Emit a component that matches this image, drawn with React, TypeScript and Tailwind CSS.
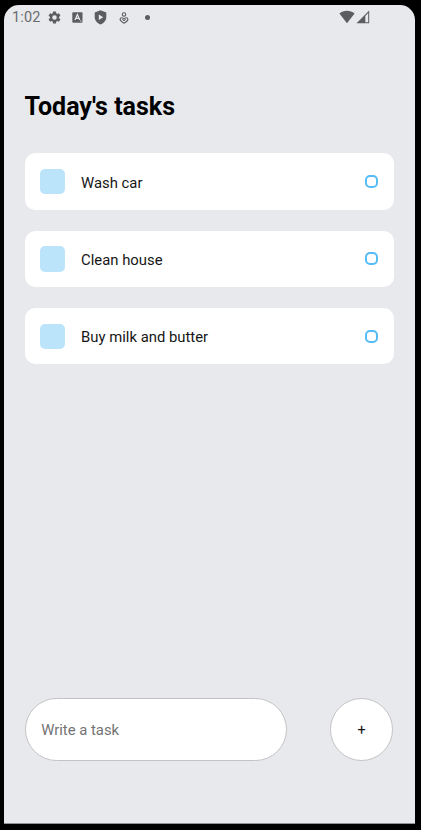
const tasks = ['Wash car', 'Clean house', 'Buy milk and butter'];

function StatusBar() {
  return (
    <div className="flex h-[25px] items-center text-[#5c5d60]">
      <span className="ml-[8px] w-[30px] pt-[1px] text-[14.5px] leading-[24px] tracking-[0.15px] whitespace-nowrap text-[#6b6c6f]">1:02</span>
      <svg className="ml-[5px] h-[15px] w-[15px]" viewBox="0 0 24 24" fill="currentColor">
        <path d="M19.14 12.94c.04-.3.06-.61.06-.94s-.02-.64-.07-.94l2.03-1.58a.49.49 0 0 0 .12-.61l-1.92-3.32a.49.49 0 0 0-.59-.22l-2.39.96a7 7 0 0 0-1.62-.94l-.36-2.54a.48.48 0 0 0-.48-.41h-3.84a.47.47 0 0 0-.47.41l-.36 2.54c-.59.24-1.13.57-1.62.94l-2.39-.96a.48.48 0 0 0-.59.22L2.74 8.87a.47.47 0 0 0 .12.61l2.03 1.58a7 7 0 0 0 0 1.88l-2.03 1.58a.49.49 0 0 0-.12.61l1.92 3.32c.12.22.37.29.59.22l2.39-.96c.5.38 1.03.7 1.62.94l.36 2.54c.05.24.24.41.48.41h3.84c.24 0 .44-.17.47-.41l.36-2.54a7 7 0 0 0 1.62-.94l2.39.96c.22.08.47 0 .59-.22l1.92-3.32a.47.47 0 0 0-.12-.61zM12 15.6A3.6 3.6 0 1 1 12 8.4a3.6 3.6 0 0 1 0 7.2z" />
      </svg>
      <svg className="ml-[10px] h-[11px] w-[11px]" viewBox="0 0 11 11">
        <rect x="0.3" y="0.3" width="10.2" height="10.4" rx="1" fill="currentColor" />
        <path d="M3 8 5.4 2.5 7.8 8M3.9 6.3h3" fill="none" stroke="#e8e9ed" strokeWidth="1.2" />
        <path d="M8 9h1.5" stroke="#e8e9ed" strokeWidth="0.8" />
      </svg>
      <svg className="ml-[11px] h-[15px] w-[13px]" viewBox="0 0 13 15">
        <path d="M6.5 0.2 12.3 2.4V7c0 3.5-2.4 6.3-5.8 7.6C3.1 13.3.7 10.5.7 7V2.4z" fill="currentColor" />
        <path d="M4.8 4.5v5.4L9.2 7.2z" fill="#e8e9ed" />
      </svg>
      <svg className="ml-[12px] h-[12px] w-[10px]" viewBox="0 0 10 12" fill="none" stroke="currentColor">
        <circle cx="5" cy="2.5" r="1.7" strokeWidth="1.1" />
        <path d="M5 7.1C4 5.2 1.2 5.2 1.1 7.3 1 9 3.1 10 5 11.2 6.9 10 9 9 8.9 7.3 8.8 5.2 6 5.2 5 7.1z" strokeWidth="1.1" />
        <path d="m3.3 7.3 1.7 1.5 1.7-1.5" strokeWidth="1" />
      </svg>
      <span className="ml-[15.5px] h-[5px] w-[5px] rounded-full bg-current" />
      <svg className="mr-[1px] mb-[1px] ml-auto h-[14px] w-[16px]" viewBox="0 0 16 14">
        <path d="M.4 3.5C4.8-.3 11.2-.3 15.6 3.5L8 13.3z" fill="currentColor" />
      </svg>
      <svg className="mr-[45px] mb-[1px] h-[14px] w-[14px]" viewBox="0 0 14 14">
        <path d="M.5 13.2 13.2.6v12.6z" fill="currentColor" />
        <path d="M9.3 5.9 12.2 3v9.3H9.3z" fill="#e8e9ed" />
      </svg>
    </div>
  );
}

function Task({ text }: { text: string }) {
  return (
    <li className="flex h-[56.3px] items-center rounded-[10.3px] bg-white px-[15.5px]">
      <span className="h-[25.4px] w-[25.4px] rounded-[5px] bg-[#bbe4fa]" />
      <span className="ml-[15.6px] pt-[2px] text-[14.85px] leading-[20px] text-[#161616]">{text}</span>
      <span className="ml-auto h-[13px] w-[13px] rounded-[5px] border-2 border-[#55bcf6]" />
    </li>
  );
}

export default function App() {
  return (
    <div className="h-[830px] w-[421px] bg-black pt-[5px] pl-[4px] font-['Roboto',sans-serif]">
      <main className="flex h-[819px] w-[411px] flex-col rounded-t-[15px] border-b border-[#929397] bg-[#e8e9ed]">
        <StatusBar />
        <h1 className="mt-[61px] ml-[20.6px] text-[25px] leading-[32px] font-bold text-black">Today's tasks</h1>
        <ul className="mt-[30.4px] ml-[20.6px] flex w-[369px] flex-col gap-[21.1px]">
          {tasks.map((text) => (
            <Task key={text} text={text} />
          ))}
        </ul>
        <form className="mt-auto mb-[62px] ml-[21.2px] flex w-[368px] justify-between">
          <input
            aria-label="Write a task"
            placeholder="Write a task"
            className="h-[63px] w-[262px] rounded-full border border-[#c3c3c3] bg-white px-[15px] text-[14.85px] text-black outline-none placeholder:text-[#737373]"
          />
          <button type="button" className="h-[63px] w-[63px] rounded-full border border-[#c3c3c3] bg-white pt-[2px] text-[14.5px] text-[#161616]">
            +
          </button>
        </form>
      </main>
    </div>
  );
}
